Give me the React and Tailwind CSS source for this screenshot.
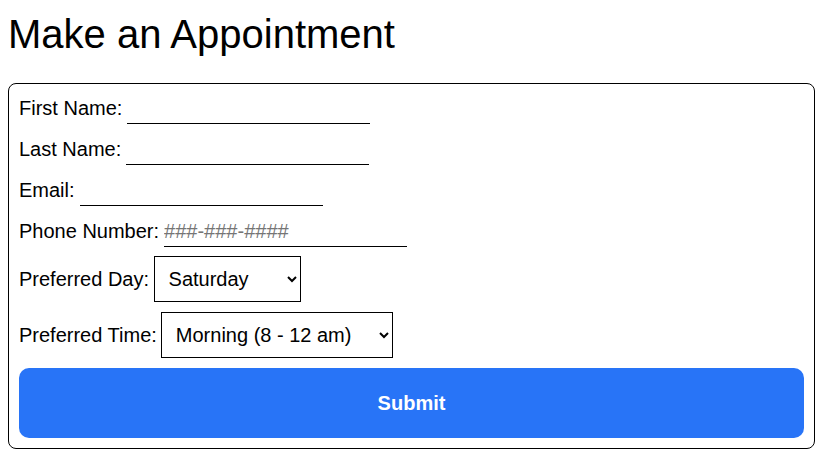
import { useState } from 'react';

const days = ['Monday', 'Tuesday', 'Wednesday', 'Thursday', 'Friday', 'Saturday', 'Sunday'];
const times = ['Morning (8 - 12 am)', 'Afternoon (12 - 4 pm)', 'Evening (4 - 8 pm)'];

function TextRow({ label, type = 'text', placeholder, last }) {
  return (
    <div className={last ? 'flex items-baseline mb-[9px]' : 'flex items-baseline mb-[10px]'}>
      <label className="text-[20px] leading-[23px]">{label}</label>
      <input
        type={type}
        placeholder={placeholder}
        className="ml-[5px] w-[243px] h-[31px] py-[3px] text-[20px] leading-[23px] border-b border-black outline-none placeholder:text-[#757575]"
      />
    </div>
  );
}

export default function App() {
  const [day, setDay] = useState('Saturday');
  const [time, setTime] = useState(times[0]);

  return (
    <div className="px-[8px] text-black bg-white font-['Liberation_Sans',Arial,sans-serif]">
      <h1 className="text-[40px] leading-[46px] pt-[11px] mb-[26px] font-normal">Make an Appointment</h1>

      <form
        className="border border-black rounded-[8px] px-[10px] pt-[9px] pb-[10px]"
        onSubmit={e => e.preventDefault()}
      >
        <TextRow label="First Name:" />
        <TextRow label="Last Name:" />
        <TextRow label="Email:" type="email" />
        <TextRow label="Phone Number:" type="tel" placeholder="###-###-####" last />

        <div className="flex items-baseline mb-[10px]">
          <label className="text-[20px] leading-[23px]">Preferred Day:</label>
          <select
            value={day}
            onChange={e => setDay(e.target.value)}
            className="ml-[4.5px] w-[147px] h-[46px] px-[10px] text-[20px] leading-[23px] border border-black bg-white"
          >
            {days.map(d => <option key={d}>{d}</option>)}
          </select>
        </div>

        <div className="flex items-baseline mb-[10px]">
          <label className="text-[20px] leading-[23px]">Preferred Time:</label>
          <select
            value={time}
            onChange={e => setTime(e.target.value)}
            className="ml-[4px] w-[232px] h-[46px] px-[10px] text-[20px] leading-[23px] border border-black bg-white"
          >
            {times.map(t => <option key={t}>{t}</option>)}
          </select>
        </div>

        <button
          type="submit"
          className="w-full h-[70px] rounded-[10px] bg-[#2874f7] text-white text-[20px] font-bold"
        >
          Submit
        </button>
      </form>
    </div>
  );
}
